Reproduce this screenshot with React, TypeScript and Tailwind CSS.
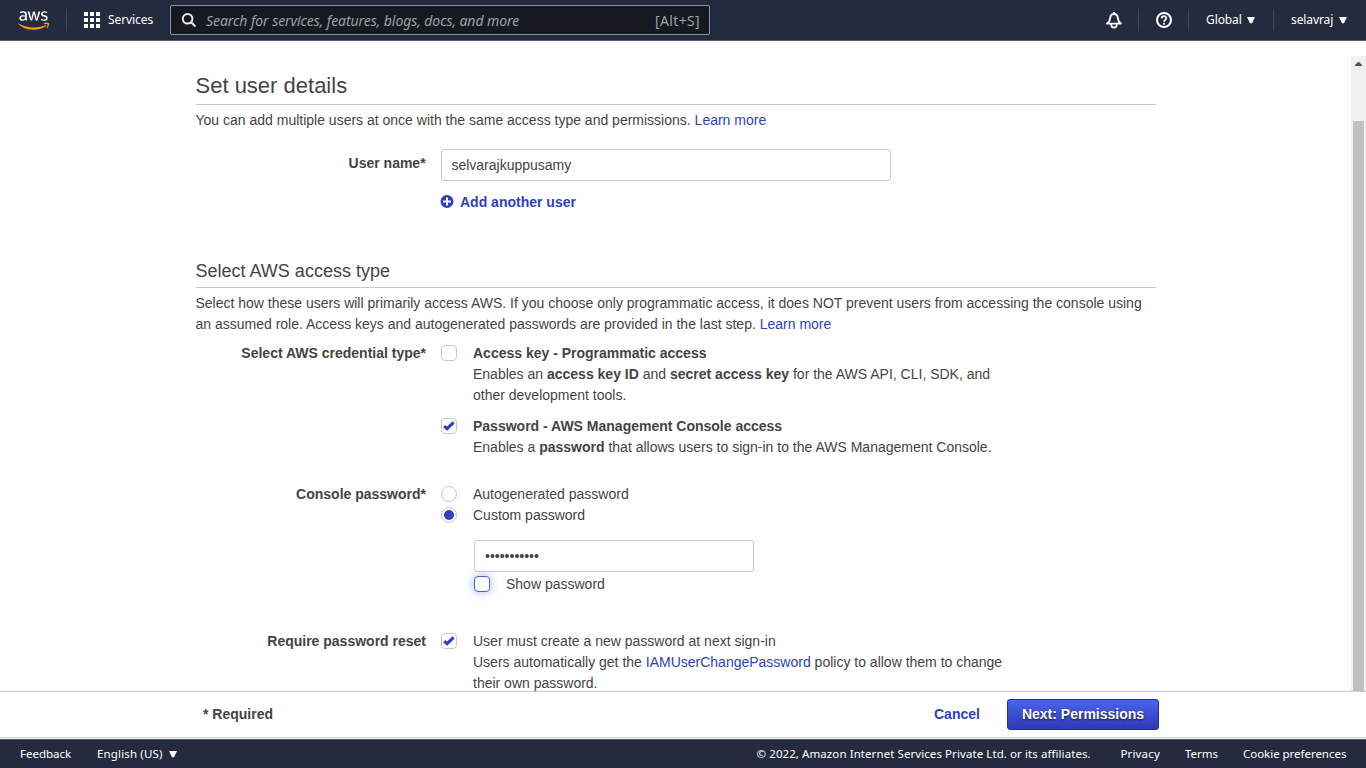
import type { ReactNode } from "react";
import { FaAws } from "react-icons/fa";

const LINK = "text-[#2d3fc4]";

function AwsLogo() {
  return (
    <>
      <svg width="0" height="0" className="absolute" aria-hidden="true">
        <defs>
          <linearGradient id="aws" gradientUnits="userSpaceOnUse" x1="0" y1="0" x2="0" y2="512">
            <stop offset="0.62" stopColor="#fff" />
            <stop offset="0.62" stopColor="#f90" />
          </linearGradient>
        </defs>
      </svg>
      <FaAws fill="url(#aws)" className="ml-[18px] h-[25px] w-[31px] shrink-0" />
    </>
  );
}

function Caret() {
  return (
    <svg width="8" height="7" viewBox="0 0 8 7" className="shrink-0 fill-white">
      <path d="M0 0H8L5 6.3H3Z" />
    </svg>
  );
}

function Divider() {
  return <div className="h-[22px] w-px shrink-0 bg-[#414750]" />;
}

function Header() {
  return (
    <header className="flex h-[41px] shrink-0 items-center border-b border-[#545b64] bg-[#252b3e] font-['Noto_Sans',sans-serif] text-xs text-white">
      <AwsLogo />
      <div className="ml-[17px] flex items-center">
        <Divider />
      </div>
      <svg width="16" height="16" viewBox="0 0 16 16" className="ml-[17px] shrink-0 fill-white">
        {[0, 6, 12].map((y) => [0, 6, 12].map((x) => <rect key={`${x}-${y}`} x={x} y={y} width="4" height="4" />))}
      </svg>
      <span className="ml-2 w-[62px] tracking-[-0.08px]">Services</span>
      <div className="flex h-[30px] w-[540px] shrink-0 items-center rounded-xs border border-[#879596] bg-[#16191f] text-sm text-[#95a5a6]">
        <svg width="16" height="16" viewBox="0 0 16 16" className="ml-[10px] shrink-0 fill-none stroke-[#eaeded] stroke-2">
          <circle cx="6.6" cy="6.8" r="4.8" />
          <path d="M10.1 10.3L14.4 14.5" />
        </svg>
        <span className="ml-[9px] flex-1 pt-px tracking-[-0.07px] italic">Search for services, features, blogs, docs, and more</span>
        <span className="mr-[9px] pt-px tracking-[0.35px]">[Alt+S]</span>
      </div>
      <div className="flex-1" />
      <svg width="16" height="17" viewBox="0 0 16 17" className="mr-4 shrink-0 fill-none stroke-white stroke-[1.8]">
        <path d="M8 0V2M1 11.6C3.3 10.2 3.9 8.7 4.1 6.3C4.4 3.5 5.8 2 8 2S11.6 3.5 11.9 6.3C12.1 8.7 12.7 10.2 15 11.6Z" strokeLinejoin="round" />
        <path d="M5.3 12V13.2C5.6 16.5 10.4 16.5 10.7 13.2V12" />
      </svg>
      <Divider />
      <svg width="16" height="16" viewBox="0 0 16 16" className="mr-4 ml-[17px] shrink-0 fill-none stroke-white stroke-2">
        <circle cx="8" cy="8" r="7" />
        <path d="M5.7 6.4C5.7 3.5 10.3 3.5 10.3 6.3C10.3 8 8 7.8 8 9.8M8 10.8V12.7" strokeWidth="1.7" />
      </svg>
      <Divider />
      <div className="flex w-[84px] items-center gap-[6px] pl-[17px]">
        <span className="w-[35px] tracking-[-0.1px]">Global</span>
        <Caret />
      </div>
      <Divider />
      <div className="flex w-[92px] items-center gap-[6px] pl-[17px]">
        <span className="w-[42px] tracking-[-0.1px]">selavraj</span>
        <Caret />
      </div>
    </header>
  );
}

function Check({ checked = false, focused = false }: { checked?: boolean; focused?: boolean }) {
  return (
    <span
      className={`mt-[2px] flex size-4 shrink-0 items-center justify-center rounded-[4px] border bg-white ${
        focused ? "border-[#4565ee] shadow-[0_0_7px_2px_rgba(90,130,250,0.35)]" : "border-[#c8c8c8]"
      }`}
    >
      {checked && (
        <svg width="12" height="10" viewBox="0 0 12 10" className="shrink-0 fill-none stroke-[#2d3fc4] stroke-3">
          <path d="M1.2 5.2L4.1 7.7L10.6 1.4" />
        </svg>
      )}
    </span>
  );
}

function Radio({ selected = false }: { selected?: boolean }) {
  return (
    <span className="mt-[2px] flex size-4 shrink-0 items-center justify-center rounded-full border border-[#c8c8c8]">
      {selected && <span className="size-[10px] rounded-full bg-[#3341c2]" />}
    </span>
  );
}

function Row({ label, className, children }: { label: string; className: string; children: ReactNode }) {
  return (
    <div className={`flex items-start gap-[15px] ${className}`}>
      <div className="w-[230px] shrink-0 text-right font-bold">{label}</div>
      <div className="flex flex-col">{children}</div>
    </div>
  );
}

function Option({ control, className = "", children }: { control: ReactNode; className?: string; children: ReactNode }) {
  return (
    <div className={`flex items-start gap-4 ${className}`}>
      {control}
      <div className="whitespace-nowrap">{children}</div>
    </div>
  );
}

function Form() {
  return (
    <main className="ml-[196px] w-[960px] shrink-0 text-sm leading-[21px] whitespace-nowrap">
      <h1 className="h-16 border-b border-[#c8c8c8] pt-[29px] indent-[-0.5px] text-[22px] leading-8">Set user details</h1>
      <p className="mt-[5px] ml-[-0.5px]">
        You can add multiple users at once with the same access type and permissions. <a className={LINK}>Learn more</a>
      </p>
      <div className="mt-[18px] flex gap-[15px]">
        <div className="w-[230px] shrink-0 pt-1 pr-[0.4px] text-right font-bold">User name*</div>
        <div>
          <div className="flex h-8 w-[450px] items-center rounded-[3px] border border-[#c8c8c8] pl-[9.4px]">selvarajkuppusamy</div>
          <div className={`mt-[11px] flex font-bold ${LINK}`}>
            <svg width="13" height="13" viewBox="0 0 13 13" className="mt-[3px] mr-[6.5px] ml-[-0.5px] shrink-0 overflow-visible">
              <g transform="translate(-0.5 0)">
                <circle cx="6.5" cy="6.5" r="6.5" fill="#2d3fc4" />
                <path d="M6.5 2.5V10.5M2.5 6.5H10.5" stroke="#fff" strokeWidth="2" />
              </g>
            </svg>
            Add another user
          </div>
        </div>
      </div>
      <h2 className="mt-[42px] h-[33px] border-b border-[#c8c8c8] pt-1 indent-[-0.5px] text-lg leading-6">Select AWS access type</h2>
      <p className="mt-[5px] ml-[-0.5px]">
        Select how these users will primarily access AWS. If you choose only programmatic access, it does NOT prevent users from accessing the console using
        <br />
        an assumed role. Access keys and autogenerated passwords are provided in the last step. <a className={LINK}>Learn more</a>
      </p>
      <Row label="Select AWS credential type*" className="mt-2">
        <Option control={<Check />}>
          <b>Access key - Programmatic access</b>
          <br />
          Enables an <b>access key ID</b> and <b>secret access key</b> for the AWS API, CLI, SDK, and
          <br />
          other development tools.
        </Option>
        <Option control={<Check checked />} className="mt-[10px]">
          <b>Password - AWS Management Console access</b>
          <br />
          Enables a <b>password</b> that allows users to sign-in to the AWS Management Console.
        </Option>
      </Row>
      <Row label="Console password*" className="mt-[26px]">
        <Option control={<Radio />}>Autogenerated password</Option>
        <Option control={<Radio selected />}>Custom password</Option>
        <div className="mt-[14px] ml-[33px] flex h-8 w-[280px] items-center rounded-[3px] border border-[#c8c8c8] pl-[10px]">•••••••••••</div>
        <Option control={<Check focused />} className="mt-[2px] ml-[33px]">Show password</Option>
      </Row>
      <Row label="Require password reset" className="mt-9">
        <Option control={<Check checked />}>
          User must create a new password at next sign-in
          <br />
          Users automatically get the <a className={LINK}>IAMUserChangePassword</a> policy to allow them to change
          <br />
          their own password.
        </Option>
      </Row>
    </main>
  );
}

function Scrollbar() {
  return (
    <div className="mt-[15px] flex w-[15px] shrink-0 flex-col items-center bg-[#f1f1f1]">
      <svg width="7" height="4" viewBox="0 0 7 4" className="mt-[6px] shrink-0 fill-[#505050]">
        <path d="M0 4V3L3 0H4L7 3V4Z" />
      </svg>
      <div className="mt-[55px] w-[11px] flex-1 bg-[#c1c1c1]" />
    </div>
  );
}

export default function App() {
  return (
    <div className="flex h-screen flex-col overflow-hidden bg-white font-['Liberation_Sans',Arial,sans-serif] text-[#444]">
      <Header />
      <div className="flex h-[650px] shrink-0 justify-between overflow-hidden">
        <Form />
        <Scrollbar />
      </div>
      <div className="z-10 mb-px flex h-[47px] shrink-0 items-center border-t border-b border-[#d0d0d0] bg-white pl-[203px] text-sm font-bold shadow-[0_0_2px_rgba(0,0,0,0.15)]">
        <span className="w-[731px] shrink-0 pb-px">* Required</span>
        <span className={`w-[73px] shrink-0 pb-px ${LINK}`}>Cancel</span>
        <button className="h-[31px] w-[152px] rounded-[3px] border border-[#232f8f] bg-linear-to-b from-[#4964ee] to-[#3039b5] pb-px text-sm text-white [text-shadow:0_1px_2px_rgba(0,0,0,0.7)]">
          Next: Permissions
        </button>
      </div>
      <footer className="flex flex-1 items-center border-t border-[#545b64] bg-[#252b3e] px-5 font-['Noto_Sans',sans-serif] text-[11.5px] text-white">
        <span className="w-[77px] shrink-0 pb-px">Feedback</span>
        <span className="w-[72px] shrink-0 pb-px tracking-[0.15px]">English (US)</span>
        <Caret />
        <span className="ml-auto w-[364px] shrink-0 pb-px tracking-[0.08px]">© 2022, Amazon Internet Services Private Ltd. or its affiliates.</span>
        <span className="w-[64.5px] shrink-0 pb-px tracking-[0.15px]">Privacy</span>
        <span className="w-[58px] shrink-0 pb-px">Terms</span>
        <span className="w-[103px] shrink-0 pb-px whitespace-nowrap tracking-[-0.03px]">Cookie preferences</span>
      </footer>
    </div>
  );
}
